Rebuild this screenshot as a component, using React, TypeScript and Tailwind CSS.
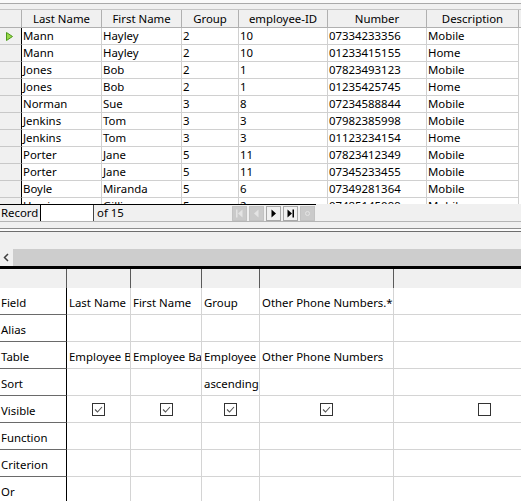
const topCols = [
  { label: 'Last Name', w: 'w-[80px]' },
  { label: 'First Name', w: 'w-[80px]' },
  { label: 'Group', w: 'w-[57px]' },
  { label: 'employee-ID', w: 'w-[89px]' },
  { label: 'Number', w: 'w-[99px]' },
  { label: 'Description', w: 'w-[92px]' },
]

const rows = [
  ['Mann', 'Hayley', '2', '10', '07334233356', 'Mobile'],
  ['Mann', 'Hayley', '2', '10', '01233415155', 'Home'],
  ['Jones', 'Bob', '2', '1', '07823493123', 'Mobile'],
  ['Jones', 'Bob', '2', '1', '01235425745', 'Home'],
  ['Norman', 'Sue', '3', '8', '07234588844', 'Mobile'],
  ['Jenkins', 'Tom', '3', '3', '07982385998', 'Mobile'],
  ['Jenkins', 'Tom', '3', '3', '01123234154', 'Home'],
  ['Porter', 'Jane', '5', '11', '07823412349', 'Mobile'],
  ['Porter', 'Jane', '5', '11', '07345233455', 'Mobile'],
  ['Boyle', 'Miranda', '5', '6', '07349281364', 'Mobile'],
  ['Harris', 'Gillian', '5', '2', '07485145099', 'Mobile'],
]

const designCols = ['w-[64px]', 'w-[71px]', 'w-[58px]', 'w-[134px]', 'w-[181px]']

type Cell = string | { check: boolean } | null

const designRows: { label: string; cells: Cell[] }[] = [
  { label: 'Field', cells: ['Last Name', 'First Name', 'Group', 'Other Phone Numbers.*', null] },
  { label: 'Alias', cells: [null, null, null, null, null] },
  { label: 'Table', cells: ['Employee Basics', 'Employee Basics', 'Employee Basics', 'Other Phone Numbers', null] },
  { label: 'Sort', cells: [null, null, 'ascending', null, null] },
  {
    label: 'Visible',
    cells: [{ check: true }, { check: true }, { check: true }, { check: true }, { check: false }],
  },
  { label: 'Function', cells: [null, null, null, null, null] },
  { label: 'Criterion', cells: [null, null, null, null, null] },
  { label: 'Or', cells: [null, null, null, null, null] },
]

function CheckBox({ checked }: { checked: boolean }) {
  return (
    <div className="w-[13px] h-[13px] border border-[#333333] bg-white flex items-center justify-center">
      {checked && (
        <svg width="9" height="7" viewBox="0 0 9 7">
          <path d="M1 3.5 L3.5 6 L8 1" fill="none" stroke="#555555" strokeWidth="1.1" />
        </svg>
      )}
    </div>
  )
}

function NavButton({ kind, enabled }: { kind: 'first' | 'prev' | 'next' | 'last' | 'new'; enabled: boolean }) {
  const c = enabled ? '#000000' : '#e4e4e4'
  return (
    <div
      className={
        'w-[15px] h-[15px] flex items-center justify-center border ' +
        (enabled ? 'bg-[#f0f0f0] border-[#a8a8a8]' : 'bg-[#cacaca] border-[#c2c2c2]')
      }
    >
      <svg width="11" height="11" viewBox="0 0 11 11">
        {kind === 'first' && (
          <>
            <rect x="2" y="1.5" width="1.5" height="8" fill={c} />
            <path d="M8.5 1.5 L4 5.5 L8.5 9.5 Z" fill={c} />
          </>
        )}
        {kind === 'prev' && <path d="M7.5 1.5 L3 5.5 L7.5 9.5 Z" fill={c} />}
        {kind === 'next' && <path d="M3.5 1.5 L8 5.5 L3.5 9.5 Z" fill={c} />}
        {kind === 'last' && (
          <>
            <path d="M2.5 1.5 L7 5.5 L2.5 9.5 Z" fill={c} />
            <rect x="7.5" y="1.5" width="1.5" height="8" fill={c} />
          </>
        )}
        {kind === 'new' && <circle cx="5.5" cy="5.5" r="2" fill="none" stroke={c} strokeWidth="1" />}
      </svg>
    </div>
  )
}

export default function App() {
  return (
    <div className="w-[521px] h-[501px] overflow-hidden bg-[#f0f0f0] text-[11.4px] text-black font-['Noto_Sans','Open_Sans',sans-serif] leading-none select-none">
      {/* table view */}
      <div className="h-[204px] overflow-hidden">
        <div className="h-[3px] bg-[#fafafa]" />
        <div className="h-[1px] bg-[#a9a9a9]" />
        <div className="h-[5px] bg-[#f0f0f0]" />
        <div className="flex h-[19px] border-t border-[#c4c4c4] bg-[#f0f0f0]">
          <div className="w-[22px] shrink-0 border-r border-b border-[#b0b0b0]" />
          {topCols.map((c) => (
            <div
              key={c.label}
              className={c.w + ' shrink-0 border-r border-b border-[#b0b0b0] flex items-center justify-center whitespace-nowrap overflow-hidden'}
            >
              {c.label}
            </div>
          ))}
          <div className="flex-1 border-b border-[#b0b0b0]" />
        </div>
        {rows.map((r, i) => (
          <div key={i} className="flex h-[17px]">
            <div className="w-[22px] shrink-0 bg-[#f0f0f0] border-r border-r-black border-b border-b-[#c8c8c8] flex items-center pl-[6px]">
              {i === 0 && (
                <svg width="7" height="9" viewBox="0 0 7 9">
                  <path d="M0.5 0.5 L6.5 4.5 L0.5 8.5 Z" fill="#9ad84a" stroke="#4c9a1c" strokeWidth="1" />
                </svg>
              )}
            </div>
            {r.map((v, j) => (
              <div
                key={j}
                className={topCols[j].w + ' shrink-0 bg-white border-r border-b border-[#d0d0d0] flex items-center px-[1px] whitespace-nowrap overflow-hidden'}
              >
                {v}
              </div>
            ))}
            <div className="flex-1 bg-white" />
          </div>
        ))}
      </div>

      {/* record navigation */}
      <div className="flex h-[17px] bg-[#f0f0f0] items-stretch">
        <div className="w-[316px] shrink-0 flex border-t border-black">
          <div className="w-[40px] shrink-0 pl-[1px] flex items-center">Record</div>
          <div className="w-[54px] shrink-0 bg-white border-l border-l-black border-r border-r-[#444444]" />
          <div className="pl-[3px] flex items-center flex-1">of 15</div>
          <div className="flex items-start gap-[2px] pt-[1px] pr-[1px]">
            <NavButton kind="first" enabled={false} />
            <NavButton kind="prev" enabled={false} />
            <NavButton kind="next" enabled />
            <NavButton kind="last" enabled />
            <NavButton kind="new" enabled={false} />
          </div>
        </div>
        <div className="flex-1" />
      </div>

      {/* splitter */}
      <div className="h-[1px] bg-[#b4b4b4]" />
      <div className="h-[6px] bg-[#f0f0f0]" />
      <div className="h-[1px] bg-[#8c8c8c]" />
      <div className="h-[2px] bg-[#fbfbfb]" />
      <div className="h-[1px] bg-[#6e6e6e]" />
      <div className="h-[17px] bg-[#f0f0f0]" />

      {/* horizontal scrollbar */}
      <div className="flex h-[17px]">
        <div className="w-[13px] bg-[#f0f0f0] flex items-center justify-center">
          <svg width="7" height="9" viewBox="0 0 7 9">
            <path d="M5 1 L1.5 4.5 L5 8" fill="none" stroke="#404040" strokeWidth="1.5" />
          </svg>
        </div>
        <div className="flex-1 bg-[#cdcdcd]" />
      </div>
      <div className="h-[3px] bg-black" />

      {/* query design grid */}
      <div className="bg-white">
        <div className="flex h-[19px] bg-[#f0f0f0]">
          <div className="w-[67px] shrink-0 border-r border-[#5a5a5a]" />
          {designCols.map((w, j) => (
            <div key={j} className={w + ' shrink-0 border-r border-[#5a5a5a]'} />
          ))}
        </div>
        {designRows.map((r) => (
          <div key={r.label} className="flex h-[27px]">
            <div className="w-[67px] shrink-0 border-r border-r-black border-b border-b-[#6a6a6a] flex items-start pl-[1px] pt-[9px]">
              {r.label}
            </div>
            {r.cells.map((c, j) => (
              <div
                key={j}
                className={
                  designCols[j] +
                  ' shrink-0 border-r border-b border-[#d4d4d4] flex whitespace-nowrap overflow-hidden ' +
                  (c !== null && typeof c === 'object' ? 'items-center justify-center' : 'items-start pl-[2px] pt-[9px]')
                }
              >
                {c !== null && typeof c === 'object' ? <CheckBox checked={c.check} /> : c}
              </div>
            ))}
          </div>
        ))}
      </div>
    </div>
  )
}
